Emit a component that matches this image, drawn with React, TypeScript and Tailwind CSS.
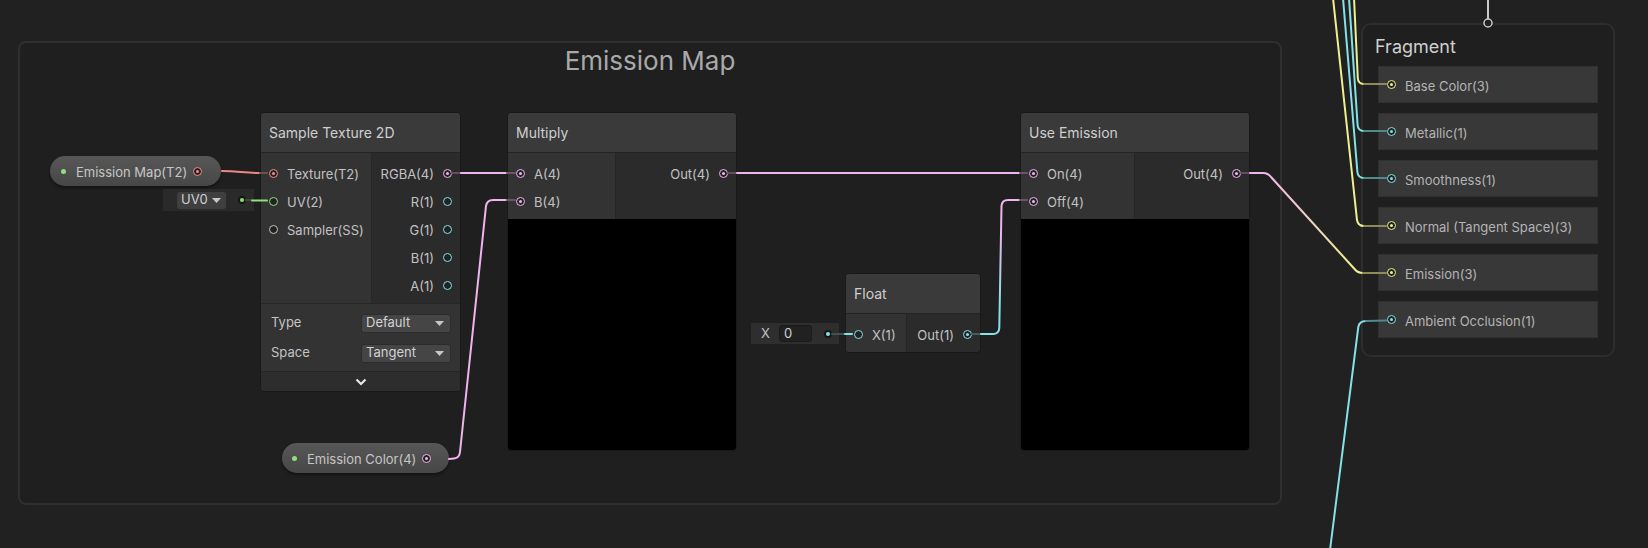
import React from "react";

type Kind = "pink" | "cyan" | "yellow" | "red" | "green" | "gray";

const ring: Record<Kind, string> = {
    pink: "border-[#f0b4ee]",
    cyan: "border-[#84e1e6]",
    yellow: "border-[#eef08c]",
    red: "border-[#f58a8a]",
    green: "border-[#8fe07a]",
    gray: "border-[#c4c4c4]",
};

const dot: Record<Kind, string> = {
    pink: "bg-[#f0b4ee]",
    cyan: "bg-[#84e1e6]",
    yellow: "bg-[#eef08c]",
    red: "bg-[#f58a8a]",
    green: "bg-[#8fe07a]",
    gray: "bg-[#c4c4c4]",
};

type Slot = { label: string; kind: Kind; on?: boolean };

function Port({kind, on = true}: { kind: Kind; on?: boolean }) {
    return (
        <span
            className={`flex h-[9px] w-[9px] shrink-0 items-center justify-center rounded-full border-[1.5px] bg-[#222222] ${ring[kind]}`}>
            {on && <span className={`h-[3px] w-[3px] rounded-full ${dot[kind]}`}/>}
        </span>
    );
}

function Caret() {
    return (
        <svg width="9" height="5" viewBox="0 0 9 5">
            <polygon points="0,0 9,0 4.5,5" fill="#c8c8c8"/>
        </svg>
    );
}

function Dropdown({label}: { label: string }) {
    return (
        <div
            className="flex h-[19px] w-[90px] items-center justify-between rounded-[3px] border border-[#2c2c2c] bg-[#454545] pl-[4px] pr-[6px] text-[13px] text-[#d2d2d2]">
            <span>{label}</span>
            <Caret/>
        </div>
    );
}

function Node({pos, title, inW, inputs, outputs, children}: {
    pos: string
    title: string
    inW: string
    inputs: Slot[]
    outputs: Slot[]
    children?: React.ReactNode
}) {
    return (
        <div className={`absolute overflow-hidden rounded-[4px] border border-[#191919] bg-[#2b2b2b] ${pos}`}>
            <div
                className="flex h-[40px] items-center border-b border-[#242424] bg-[#3a3a3a] pl-[8px] text-[14px] text-[#cfcfcf]">
                {title}
            </div>
            <div className="flex">
                <div className={`flex shrink-0 flex-col bg-[#333333] pb-[4px] pt-[6px] ${inW}`}>
                    {inputs.map(s => (
                        <div key={s.label} className="flex h-7 items-center gap-[9px] pl-[8px]">
                            <Port kind={s.kind} on={s.on}/>
                            <span className="translate-y-[2px] text-[13px] text-[#c2c2c2]">{s.label}</span>
                        </div>
                    ))}
                </div>
                <div className="flex flex-1 flex-col items-end border-l border-[#262626] pb-[4px] pt-[6px]">
                    {outputs.map(s => (
                        <div key={s.label} className="flex h-7 items-center gap-[9px] pr-[8px]">
                            <span className="translate-y-[2px] text-[13px] text-[#c2c2c2]">{s.label}</span>
                            <Port kind={s.kind} on={s.on}/>
                        </div>
                    ))}
                </div>
            </div>
            {children}
        </div>
    );
}

function FragmentRow({label, kind}: { label: string; kind: Kind }) {
    return (
        <div className="flex h-[37px] items-center gap-[9px] border border-[#303030] bg-[#383838] pl-[8px]">
            <Port kind={kind}/>
            <span className="translate-y-[2px] text-[13px] text-[#b4b4b4]">{label}</span>
        </div>
    );
}

const PINK = "#f0b4ee";
const CYAN = "#84e1e6";
const YELLOW = "#eef08c";

export default function App() {
    return (
        <div className="relative h-[548px] w-[1648px] overflow-hidden bg-[#212121] font-['Inter',sans-serif]">

            {/* group */}
            <div
                className="absolute left-[18px] top-[41px] h-[464px] w-[1264px] rounded-[8px] border-2 border-[#2f2f2f] bg-[#1f1f1f]">
                <div className="pt-[2px] text-center text-[26px] leading-[32px] text-[#a9a9a9]">Emission Map</div>
            </div>

            {/* fragment stack */}
            <div
                className="absolute left-[1361px] top-[23px] flex h-[334px] w-[254px] flex-col rounded-[10px] border-2 border-[#2d2d2d] bg-[#1f1f1f] px-[15px]">
                <div className="-ml-[3px] pb-[9px] pt-[12px] text-[18px] leading-[20px] text-[#d0d0d0]">Fragment</div>
                <div className="flex flex-col gap-[10px]">
                    <FragmentRow label="Base Color(3)" kind="yellow"/>
                    <FragmentRow label="Metallic(1)" kind="cyan"/>
                    <FragmentRow label="Smoothness(1)" kind="cyan"/>
                    <FragmentRow label="Normal (Tangent Space)(3)" kind="yellow"/>
                    <FragmentRow label="Emission(3)" kind="yellow"/>
                    <FragmentRow label="Ambient Occlusion(1)" kind="cyan"/>
                </div>
            </div>

            {/* properties */}
            <div
                className="absolute left-[50px] top-[156px] flex h-[30px] w-[171px] items-center rounded-full bg-gradient-to-b from-[#575757] to-[#474747] pl-[11px] shadow-[0_2px_3px_rgba(0,0,0,0.4)]">
                <span className="h-[5px] w-[5px] rounded-full bg-[#8fe07a]"/>
                <span className="ml-[10px] translate-y-[2px] text-[13px] text-[#c6c6c6]">Emission Map(T2)</span>
                <span className="ml-auto mr-[19px]"><Port kind="red"/></span>
            </div>

            <div
                className="absolute left-[282px] top-[443px] flex h-[30px] w-[167px] items-center rounded-full bg-gradient-to-b from-[#575757] to-[#474747] pl-[10px] shadow-[0_2px_3px_rgba(0,0,0,0.4)]">
                <span className="h-[5px] w-[5px] rounded-full bg-[#8fe07a]"/>
                <span className="ml-[10px] translate-y-[2px] text-[13px] text-[#c6c6c6]">Emission Color(4)</span>
                <span className="ml-auto mr-[18px]"><Port kind="pink"/></span>
            </div>

            {/* inline inputs */}
            <div className="absolute left-[163px] top-[189px] flex h-[22px] w-[91px] items-center bg-[#2a2a2a]">
                <div
                    className="ml-[14px] flex h-[17px] w-[49px] items-center justify-between rounded-[3px] bg-[#3f3f3f] pl-[4px] pr-[5px] text-[13px] text-[#d0d0d0]">
                    <span>UV0</span>
                    <Caret/>
                </div>
                <span className="ml-auto mr-[8px] flex h-[8px] w-[8px] items-center justify-center rounded-full bg-[#151515]">
                    <span className="h-[4px] w-[4px] rounded-full bg-[#8fe07a]"/>
                </span>
            </div>

            <div className="absolute left-[751px] top-[323px] flex h-[21px] w-[88px] items-center bg-[#2e2e2e] pl-[10px]">
                <span className="text-[13px] text-[#c4c4c4]">X</span>
                <div
                    className="ml-[9px] flex h-[17px] w-[33px] items-center rounded-[3px] border border-[#1a1a1a] bg-[#212121] pl-[4px] text-[13px] text-[#d0d0d0]">
                    0
                </div>
                <span className="ml-auto mr-[7px] flex h-[8px] w-[8px] items-center justify-center rounded-full bg-[#151515]">
                    <span className="h-[4px] w-[4px] rounded-full bg-[#84e1e6]"/>
                </span>
            </div>

            {/* nodes */}
            <Node
                pos="left-[260px] top-[112px] w-[201px]"
                title="Sample Texture 2D"
                inW="w-[110px]"
                inputs={[
                    {label: "Texture(T2)", kind: "red"},
                    {label: "UV(2)", kind: "green", on: false},
                    {label: "Sampler(SS)", kind: "gray", on: false},
                ]}
                outputs={[
                    {label: "RGBA(4)", kind: "pink"},
                    {label: "R(1)", kind: "cyan", on: false},
                    {label: "G(1)", kind: "cyan", on: false},
                    {label: "B(1)", kind: "cyan", on: false},
                    {label: "A(1)", kind: "cyan", on: false},
                ]}
            >
                <div className="border-t border-[#262626] bg-[#333333] pb-[3px] pt-[4px]">
                    <div className="flex h-[30px] items-center justify-between pl-[10px] pr-[9px]">
                        <span className="text-[13px] text-[#c4c4c4]">Type</span>
                        <Dropdown label="Default"/>
                    </div>
                    <div className="flex h-[30px] items-center justify-between pl-[10px] pr-[9px]">
                        <span className="text-[13px] text-[#c4c4c4]">Space</span>
                        <Dropdown label="Tangent"/>
                    </div>
                </div>
                <div className="flex h-[20px] items-center justify-center border-t border-[#262626] bg-[#2d2d2d]">
                    <svg width="12" height="8" viewBox="0 0 12 8">
                        <polyline points="1.5,1.5 6,6 10.5,1.5" fill="none" stroke="#e6e6e6" strokeWidth="2.2"/>
                    </svg>
                </div>
            </Node>

            <Node
                pos="left-[507px] top-[112px] w-[230px]"
                title="Multiply"
                inW="w-[107px]"
                inputs={[
                    {label: "A(4)", kind: "pink"},
                    {label: "B(4)", kind: "pink"},
                ]}
                outputs={[{label: "Out(4)", kind: "pink"}]}
            >
                <div className="h-[231px] bg-black"/>
            </Node>

            <Node
                pos="left-[845px] top-[273px] w-[136px]"
                title="Float"
                inW="w-[60px]"
                inputs={[{label: "X(1)", kind: "cyan", on: false}]}
                outputs={[{label: "Out(1)", kind: "cyan"}]}
            />

            <Node
                pos="left-[1020px] top-[112px] w-[230px]"
                title="Use Emission"
                inW="w-[113px]"
                inputs={[
                    {label: "On(4)", kind: "pink"},
                    {label: "Off(4)", kind: "pink"},
                ]}
                outputs={[{label: "Out(4)", kind: "pink"}]}
            >
                <div className="h-[231px] bg-black"/>
            </Node>

            {/* edges */}
            <svg className="pointer-events-none absolute inset-0" width={1648} height={548} fill="none"
                 strokeWidth={2} strokeLinecap="round">
                <defs>
                    <linearGradient id="offEdge" gradientUnits="userSpaceOnUse" x1="0" y1="334" x2="0" y2="200">
                        <stop offset="0.2" stopColor={CYAN}/>
                        <stop offset="0.8" stopColor={PINK}/>
                    </linearGradient>
                    <linearGradient id="emEdge" gradientUnits="userSpaceOnUse" x1="1262" y1="0" x2="1358" y2="0">
                        <stop offset="0" stopColor={PINK}/>
                        <stop offset="1" stopColor={YELLOW}/>
                    </linearGradient>
                </defs>

                {/* texture */}
                <path d="M222 171 C238 171 244 173 260 173" stroke="#ee8686"/>
                <path d="M260 173 H267" stroke="#6e5050"/>

                {/* uv */}
                <path d="M246 200 H252" stroke="#3e4c3a"/>
                <path d="M252 200.5 H267" stroke="#8fe07a"/>

                {/* rgba -> a */}
                <path d="M452 173 H461" stroke="#5e4e5e"/>
                <path d="M461 173 H507" stroke={PINK}/>
                <path d="M507 173 H515" stroke="#6a566a"/>

                {/* emission color -> b */}
                <path d="M449 459 L454 458.5 Q459.5 458 460 452 L486 206 Q487 200 493 200 H507" stroke={PINK}/>
                <path d="M507 200 H515" stroke="#6a566a"/>

                {/* multiply -> on */}
                <path d="M728 173 H737" stroke="#5e4e5e"/>
                <path d="M737 173 H1020" stroke={PINK}/>
                <path d="M1020 173 H1027" stroke="#6a566a"/>

                {/* x -> float */}
                <path d="M832 334 H845" stroke="#3f5252"/>
                <path d="M845 334 H852" stroke={CYAN}/>

                {/* float -> off */}
                <path d="M972 334 H981" stroke="#465a5b"/>
                <path d="M981 334 H993 Q999 334 999.3 328 L1001.5 206 Q1002 200 1008 200 H1020" stroke="url(#offEdge)"/>
                <path d="M1020 200 H1027" stroke="#6a566a"/>

                {/* use emission -> emission */}
                <path d="M1241 173 H1250" stroke="#5e4e5e"/>
                <path d="M1250 173 H1263 Q1268 173 1271 177 L1355 269.5 Q1358 273 1363 273" stroke="url(#emEdge)"/>
                <path d="M1363 273 H1386" stroke="#8c8c58"/>

                {/* incoming from above */}
                <path d="M1333 -2 L1357 220 Q1358 226 1364 226" stroke={YELLOW}/>
                <path d="M1364 226 H1386" stroke="#8c8c58"/>
                <path d="M1343 -2 L1357.4 172 Q1358 178 1364 178" stroke={CYAN}/>
                <path d="M1364 178 H1386" stroke="#4f8a8e"/>
                <path d="M1349 -2 L1357.6 125 Q1358 131 1364 131" stroke={CYAN}/>
                <path d="M1364 131 H1386" stroke="#4f8a8e"/>
                <path d="M1354 -2 L1357.8 78 Q1358 84 1364 84" stroke={YELLOW}/>
                <path d="M1364 84 H1386" stroke="#8c8c58"/>

                {/* ambient occlusion from below */}
                <path d="M1330 550 L1358.3 327 Q1359.3 321 1366 321" stroke={CYAN}/>
                <path d="M1366 321 L1386 320.5" stroke="#4f8a8e"/>

                {/* fragment block input */}
                <path d="M1488 -2 V19" stroke="#c8c8c8"/>
                <circle cx="1488" cy="23" r="4" stroke="#c8c8c8" strokeWidth="1.5" fill="#202020"/>
            </svg>
        </div>
    );
}
